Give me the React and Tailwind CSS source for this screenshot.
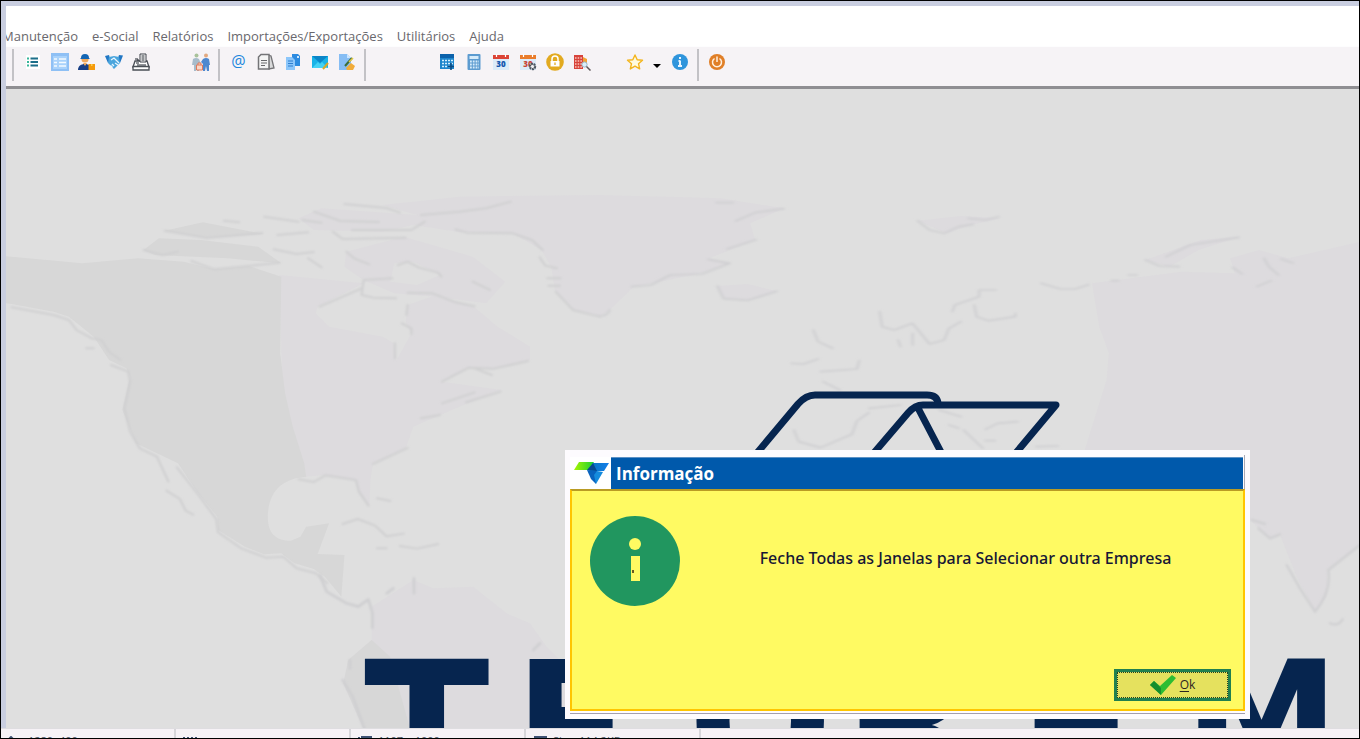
import React from 'react';

const menuItems = ['Manutenção', 'e-Social', 'Relatórios', 'Importações/Exportações', 'Utilitários', 'Ajuda'];

const icons = {
    list: (
        <>
            <path fill="#fff" d="M2 2h14v14H2z" />
            <path stroke="#1d6f8a" strokeWidth="2" d="M6.500 5.500H14M6.500 9H14M6.500 12.500H14" />
            <path stroke="#37b59a" strokeWidth="2" d="M3 5.500h2M3 9h2M3 12.500h2" />
        </>
    ),
    form: (
        <>
            <path fill="#8fc0f5" d="M0 0h18v18H0z" />
            <path fill="#a9d2fb" d="M2 3h14v13H2z" />
            <path stroke="#f4faff" strokeWidth="1.600" d="M3 6h3M8 6h7M3 9.500h3M8 9.500h7M3 13h3M8 13h7" />
        </>
    ),
    worker: (
        <>
            <circle cx="7" cy="6" r="3.600" fill="#f0a95c" />
            <path fill="#1466b4" d="M3 5a4 4 0 0 1 8 0l1 1H2z" />
            <path fill="#173f86" d="M0 17c0-4 3-6 7-6s6 2 6 6z" />
            <path fill="#f0a95c" d="m5 10 2 3 2-3z" />
            <path fill="#f59a0c" d="M10.500 11H17v6h-6.500z" />
            <path fill="#fbd04c" d="M13 11h1.500v2H13z" />
        </>
    ),
    handshake: (
        <>
            <path fill="#2277c4" d="m0 3 4-1 2 7-3 1zM18 2.500l-4-.5-2 6 3 2z" />
            <path fill="#4aa5dd" d="m4 4 5-1 5 1 1 6-6 6-6-6z" />
            <path fill="none" stroke="#e7f5ff" strokeWidth="1.300" d="m6 7 3-2 5 5M7 11l2 2M5.500 12.500l2 2M10 10l3 2" />
        </>
    ),
    register: (
        <>
            <path fill="#fff" stroke="#4a4f56" strokeWidth="1.300" d="M3 8h12l2 6H1z" />
            <path fill="#fff" stroke="#4a4f56" strokeWidth="1.300" d="M1 13.500h16V17H1z" />
            <path fill="#fff" stroke="#3c4148" d="M8 1h6v8H8z" />
            <path stroke="#20262e" d="M9.500 3h3M9.500 5h3M9.500 7h3M4 10h3M5 12h9M3 6h3v2" />
        </>
    ),
    people: (
        <>
            <circle cx="4.500" cy="2.500" r="2" fill="#a9c29b" />
            <circle cx="14" cy="2.500" r="2" fill="#e2a980" />
            <path fill="#a7bccb" d="M1 6q3-2 6 0l2 5-2 1v6H5v-5H4v5H2v-6H0z" />
            <path fill="#4e88cf" d="M11 6q3-2 6 0l1 6h-1v6h-2l-1-5-1 5h-2v-7L9 9z" />
            <path fill="#f9d8c8" stroke="#e07a5a" d="M4.500 12h6v5h-6zM6 12v-2h3v2" />
        </>
    ),
    copy: (
        <>
            <path fill="#2d8be0" d="M8 1h6l2 2v10H8z" />
            <path fill="#8cc6fa" d="M2 4h6l3 3v10H2z" />
            <path stroke="#2f7fd0" d="M4 8h5M4 10.500h5M4 13h5" />
            <path fill="#cfe8ff" d="M13 3h2v2h-2z" />
        </>
    ),
    papers: (
        <>
            <path fill="#d9d9da" stroke="#747477" strokeWidth="1.300" d="m11 2 3 1 3 12-5 1z" />
            <path fill="#f4f4f4" stroke="#747477" strokeWidth="1.500" d="M4 1.500h8V16H1.500V4z" />
            <path stroke="#68686b" strokeWidth="1.200" d="M4 7.500h6M4 10h6M4 12.500h4" />
        </>
    ),
    mail: (
        <>
            <path fill="#18b3e8" d="M1 3h16v12H1z" />
            <path fill="#0b85c8" d="m1 3 8 7 8-7z" />
            <path fill="#43d2f5" d="m1 15 6-6 2 2 2-2 6 6z" />
            <path stroke="#d7a829" strokeWidth="2" d="m12 16 5-6" />
        </>
    ),
    edit: (
        <>
            <path fill="#86bdf4" d="M1 1h8l4 4v12H1z" />
            <path fill="#cbe5ff" d="m9 1 4 4H9z" />
            <path fill="#f1ac3a" d="m8 15 5-5 4 3-2 4H9z" />
            <path stroke="#3c6d37" strokeWidth="2" d="m7 13 7-8" />
            <path stroke="#e5c944" strokeWidth="1.600" d="m11 9 4-4" />
        </>
    ),
    schedule: (
        <>
            <path fill="#1d86cd" d="M2 2h14v14H2z" />
            <path fill="#0c62ab" d="M2 1h14v4H2z" />
            <path stroke="#d5f0ff" strokeWidth="1.500" strokeDasharray="2 1" d="M4 7.500h11M4 10.500h11M4 13.500h8" />
            <path stroke="#0b4a82" strokeWidth="1.600" d="M13 10v7M10 13.500h6" />
        </>
    ),
    calculator: (
        <>
            <rect x="2.500" y="1" width="13" height="16" rx="1" fill="#5c9bd0" />
            <path fill="#d5ebfa" d="M4.500 3h9v3h-9z" />
            <path stroke="#d5ebfa" strokeWidth="1.800" strokeDasharray="1.800 1" d="M5 8.500h9M5 11.500h9M5 14.500h9" />
        </>
    ),
    lock: (
        <>
            <circle cx="9" cy="9" r="8.800" fill="#e2aa20" />
            <path fill="none" stroke="#fff" strokeWidth="1.500" d="M6 8V6a3 3 0 0 1 6 0v2" />
            <path fill="#fff" d="M4.500 8h9v5.500h-9z" />
            <path stroke="#e2aa20" strokeWidth="1.300" d="M9 9.500v2.500" />
        </>
    ),
    building: (
        <>
            <path fill="#d8433b" d="M1 2h9v14H1z" />
            <path fill="#f2a233" d="m10 4 4 2v5h-4z" />
            <path stroke="#f8c9bf" strokeWidth="1.500" strokeDasharray="1.500 1.200" d="M2 5h8M2 8h8M2 11h8M2 14h7" />
            <circle cx="11.500" cy="11.500" r="2.600" fill="#d9effc" stroke="#9bb7c8" />
            <path stroke="#5d5557" strokeWidth="1.500" d="m13.500 13.500 4 4" />
        </>
    ),
    star: <path fill="#fffbe0" stroke="#f3b51f" strokeWidth="1.400" strokeLinejoin="round" d="m9 2 2.200 4.700 5.300.5-4 3.500 1.200 5.200L9 13.200l-4.700 2.700 1.200-5.200-4-3.500 5.300-.5z" />,
    info: (
        <>
            <circle cx="9" cy="9" r="8" fill="#2f95dc" />
            <path stroke="#e8f5ff" strokeWidth="2" d="M9 4v2M9 7.500V13M7 13h4M7.500 8H9" />
        </>
    ),
    power: (
        <>
            <circle cx="9" cy="9" r="8" fill="#e07f27" />
            <path fill="none" stroke="#fff0df" strokeWidth="1.500" d="M6.500 5.500a4.500 4.500 0 1 0 5 0M9 3.500V9" />
        </>
    ),
};

function Calendar({ top, gear }) {
    return (
        <>
            <path fill="#dcebf8" d="M1 4h16v13H1z" />
            <path fill={top} d="M1 2h16v4H1z" />
            <path stroke="#fff" strokeWidth="1.200" d="M4.500 1v3M13.500 1v3" />
            <text x="9" y="14" textAnchor="middle" fontFamily="Open Sans, sans-serif" fontSize="8" fontWeight="800" fill={gear ? '#c8473a' : '#1556ae'}>30</text>
            {gear && <circle cx="13.500" cy="13.500" r="2.600" fill="#f3f0f2" stroke="#4c5560" strokeWidth="2.200" strokeDasharray="2 .6" />}
        </>
    );
}

function Tool({ label, children }) {
    return (
        <button type="button" aria-label={label} className="w-[27px] h-[26px] flex items-center justify-center shrink-0">
            <svg viewBox="0 0 18 18" className="w-[18px] h-[18px]" fill="none">{children}</svg>
        </button>
    );
}

function Separator() {
    return <div className="w-0.5 h-8 bg-[#c3c2c6] shrink-0 mx-1" />;
}

function Toolbar() {
    return (
        <div className="h-10 flex items-start bg-[#f6f3f6] border-t border-[#fdfdfe] pl-0.5 pt-0.5 overflow-hidden shrink-0">
            <Separator />
            <div className="flex ml-px">
                <Tool label="Lista">{icons.list}</Tool>
                <Tool label="Cadastro">{icons.form}</Tool>
                <Tool label="Funcionários">{icons.worker}</Tool>
                <Tool label="Contratos">{icons.handshake}</Tool>
                <Tool label="Folha">{icons.register}</Tool>
            </div>
            <div className="ml-[33px]">
                <Tool label="Autônomos">{icons.people}</Tool>
            </div>
            <Separator />
            <div className="flex ml-px">
                <button type="button" aria-label="E-mail" className="w-[27px] h-[26px] font-['Open_Sans',sans-serif] text-base leading-none text-[#1d87dd] pb-0.5">@</button>
                <Tool label="Documentos">{icons.papers}</Tool>
                <Tool label="Copiar">{icons.copy}</Tool>
                <Tool label="Mensagens">{icons.mail}</Tool>
                <Tool label="Editar">{icons.edit}</Tool>
            </div>
            <Separator />
            <div className="flex ml-[63px]">
                <Tool label="Agenda">{icons.schedule}</Tool>
                <Tool label="Calculadora">{icons.calculator}</Tool>
                <Tool label="Calendário"><Calendar top="#dc4436" /></Tool>
                <Tool label="Configurar calendário"><Calendar top="#ea7d2c" gear /></Tool>
                <Tool label="Bloquear">{icons.lock}</Tool>
                <Tool label="Consultar empresa">{icons.building}</Tool>
            </div>
            <div className="flex ml-[26px]">
                <Tool label="Favoritos">{icons.star}</Tool>
                <button type="button" aria-label="Abrir favoritos" className="w-[18px] h-[26px] pt-2 flex items-center justify-center">
                    <svg viewBox="0 0 8 4" className="w-2 h-1"><path d="M0 0h8L4 4z" /></svg>
                </button>
                <Tool label="Informações">{icons.info}</Tool>
            </div>
            <Separator />
            <Tool label="Sair">{icons.power}</Tool>
        </div>
    );
}

function Wallpaper() {
    return (
        <svg viewBox="6 89 1353 639" preserveAspectRatio="xMinYMin slice" className="absolute inset-0 w-full h-full" fill="none" aria-hidden="true">
            <defs>
                <filter id="soft"><feGaussianBlur stdDeviation="3" /></filter>
            </defs>

            {/* North America and Greenland */}
            <g transform="translate(0 180) scale(.3827 .3333)">
                <g fill="#dddbde">
                    <path d="M730 285 950 310 830 380 825 400 860 440 1000 470 1030 490 1036 540 1075 460 1060 430 1065 375 1140 345 1240 382 1300 440 1385 500 1385 540 1290 566 1225 563 1155 605 1310 630 1225 668 1150 705 1080 740 1060 805 975 850 968 900 965 978 935 935 930 900 850 885 795 890 740 700z" />
                    <path d="m1090 105-90-30 200-25 370-5v363l-70-18-50-60-10-70-25-50-75-50-145-5-115-20-80 20-180-5-40-35 60-30z" />
                    <path d="m905 215 150-45 180 60 85 75-50 65-130-20-110-10-80-40-50-40z" />
                    <path d="m1030 250 50-5 70 40-60 30-70-10z" fill="#dfdfdf" />
                </g>
                <g fill="#d7d7d7">
                    <path d="M10 228 215 250 360 235 480 245 560 268 650 258 735 290 732 520 745 640 765 740 795 850 800 890C740 895 705 930 700 1000c-3 60 20 82 60 82l25-12 15-30 60-10-30 92 70 3-8 125-42-58-30-25-50-17-35-30-45 3-50-23-70-50-2-40-53-75-50-85-55-30-55-30-35-100 20-100-10-25-45-25-40-70-65-60-40-15-110-23-20-3z" />
                    <path d="m375 210 40-35 110 5 150 20 60 50-140-15-190-10z" />
                    <path d="m430 152 100-25 160 35-150 12z" />
                </g>
                <g stroke="#d0d0d1" strokeWidth="6" strokeLinecap="round" strokeLinejoin="round" filter="url(#soft)">
                    <path d="m30 382 110 23 40 15 20 30 40 25 25 5 20 35 30 25M290 555l45 20 5 30-15 80 15 70 25 50 45 25 30 75M462 862l55 80 48 75 5 40 60 48 65 28 45-3 35 35 50 15 30 30" />
                    <path d="m435 932 35 25 15 35 20 12M225 505h20M375 210l50 15 40-10M430 152l110 22 145-15M500 243l60 25 90-10 80-10M585 122l40 5M690 110l90 15M820 95l70 28 100 3M900 72l110 12 35 14M790 120l50 8M725 165l80-8M715 208l60 14 45-6M805 235l35 27M870 155l25 22 165-4M920 150h155l35-25M905 215l20 20 40 18M1100 105l100-10 70-10 65-20M1190 148l30 10 120 2 50 20 28 30M1410 232l15 25 30 8M1430 295h35M1433 317h30M1452 335l45 55 70 20M1040 255l25-10 30 18 50 15 8 12M1235 305l45 25M1065 338l65 2 60 27 50 12M950 300l75-5M950 300l-5 45 30 8 60 2M835 380l110-55M1065 375l-3 30M1050 430l25 15v18M1032 490v45M1155 605l70-42 65 3 90-23M1240 565l45 20M1155 670l85-33M1218 667l90-32M1100 715l50-10M975 852l90-48M780 898l40 8 30-20 80 14 8 35 25 42M985 955l35 8M895 1032l40-15 45 20 30 32 45-8M985 1105h25M1045 1098l45 8 55-14" />
                </g>
            </g>

            {/* Europe and Asia */}
            <g transform="translate(600 180) scale(.4847 .3333)">
                <g fill="#dddbde">
                    <path d="m0 45 250 10 130 30-70 45 10 50-95 55 45 15-70 33-130 37-50 70-20 18z" />
                    <path d="M1015 310 1200 275 1310 280 1300 235 1360 210 1420 235 1568 185V1600H1330V810H1000L1045 600 1050 520 1030 440z" />
                    <path d="m242 318 13 38 55 5 55-27-60-22zM655 122l60 38 50-25 60-20-80-7zM1125 240l50 20 60-50 85-40-80 10z" />
                </g>
                <g stroke="#cfcfd1" strokeWidth="5" strokeLinecap="round" strokeLinejoin="round" filter="url(#soft)">
                    <path d="M0 408q15 0 20-18M65 320l40-5 40-30 65-3 58-32-45-12M240 68h35M280 123l40-25 60-12M262 207l60-28M242 318l13 38 50 5 60-27M655 122l25 28 30 10 30-20 30-7M760 115l35 5 28-10M1168 230l50-35 100-23M1125 240l30 18 40 2M910 310l40 17 30 0 28-13M1055 302h15M1090 285h18M1355 320l30-18M1305 262l20 20M1370 235l10 25 20 25M1405 237l25 12" />
                    <path d="m577 395 5 45 25 10 38-20 35 62 30-12 10-35 25-20M817 330h-35v20l-50 25-5 20M772 375l5 35 25 12 55-12v-10M440 450l10 35 30 20M395 550l25 2 30-15M455 575l75-8 5-25M615 480l5 20M645 460v35M555 685l65-10M400 750l10 35 45 18 65-40 10-40 25-25M700 690l45 20M720 735l20 10M750 750l40 55M795 748l25-18 42-5M795 782h20M900 800l45-2M460 605l35 25" />
                </g>
            </g>
            <g transform="translate(1220 440) scale(.3333)">
                <path fill="#dfdfdf" d="M-60 120 90 240l60 55 30-10 50 125 55 105 35-45 2-80 98-75v550H-60z" />
                <path stroke="#d0d0d2" strokeWidth="7" strokeLinecap="round" filter="url(#soft)" d="m95 240 40 12M115 265l35 30 30-12M200 375l40 70 45 70q50-60 40-125l95-75M330 550q25 10 38-12" />
            </g>

            {/* South America */}
            <g transform="translate(300 480) scale(.3333)">
                <path fill="#dddbde" d="m215 380 125-80 60 25 120-5 100 80 70 30 50 70 60 60v185H190l-60-135 15-70 70-60z" />
                <path fill="#d7d7d7" d="m215 480 55 50 60 215H190l-60-135 15-70z" />
                <path stroke="#cfcfd1" strokeWidth="8" strokeLinecap="round" strokeLinejoin="round" filter="url(#soft)" d="m60 285 20 50 60 35 35 10 30-22 12 40v45M150 540v25M128 600l30 50 35 95M342 295v45M260 340l20-15M700 510l20-20" />
            </g>

            {/* Brand mark */}
            <g stroke="#06254f" strokeWidth="7" strokeLinejoin="round">
                <path d="m757 453 41-49q8-9 17-9h112q10 0 11 8" />
                <path d="m873 454 35-41q7-8 15-8h133l-41 49M918 408l24 46" />
            </g>
            <text fill="#06254f" fontFamily="DejaVu Sans, sans-serif" fontWeight="700" fontSize="170">
                <tspan x="364" y="793" fontSize="184">T</tspan>
                <tspan x="514 688 844 1019" y="783">EORE</tspan>
                <tspan x="1184" y="773" fontSize="156">M</tspan>
            </text>
        </svg>
    );
}

function InfoDialog() {
    return (
        <section role="alertdialog" aria-labelledby="dialog-title" aria-describedby="dialog-message" className="absolute right-[109px] bottom-[9px] w-[685px] bg-[#fdfbfe] p-[5px]">
            <header className="flex h-[34px] pt-0.5 border-r border-[#a9a9b5]">
                <div className="w-[41px] bg-white flex items-center justify-center">
                    <svg viewBox="0 0 36 24" className="w-9 h-6" aria-hidden="true">
                        <defs>
                            <linearGradient id="leaf"><stop stopColor="#a8f500" /><stop offset="1" stopColor="#18cf35" /></linearGradient>
                            <linearGradient id="wing"><stop stopColor="#0873bd" /><stop offset="1" stopColor="#137eea" /></linearGradient>
                        </defs>
                        <path fill="url(#leaf)" d="M6 1h15l-5 8H1z" />
                        <path fill="url(#wing)" d="M20 2h16l-5 8H16z" />
                        <path fill="#064990" d="m14 9 6-7 4 8z" />
                        <path fill="#0862bd" d="m14 9 10 1-1 13-5-5z" />
                        <path fill="#158bdd" d="m24 10 6 1-7 12-2-9z" />
                    </svg>
                </div>
                <h1 id="dialog-title" className="flex-1 mr-px bg-[#0059ab] border-t border-[#5d91c4] text-white font-bold text-[17px] leading-8 pl-[5px]">Informação</h1>
            </header>
            <div className="border-b border-[#a49fae] pb-0.5">
                <div className="bg-[#fffa62] border-2 border-[#ffc500] border-t-[#b99b24] px-3 pb-2 pt-[25px]">
                    <div className="flex items-start pl-1.5">
                        <svg viewBox="0 0 90 90" className="w-[90px] h-[90px] shrink-0" aria-hidden="true">
                            <circle cx="45" cy="45" r="45" fill="#21965f" />
                            <circle cx="45" cy="28" r="6" fill="#fffa62" />
                            <path fill="#fffa62" d="M41 40h9v25h-9z" />
                            <path fill="#695b22" d="M42 54h2v3h-2z" />
                        </svg>
                        <p id="dialog-message" className="flex-1 text-center font-['Noto_Sans','Open_Sans',sans-serif] text-base leading-6 pt-[30px] pl-5 text-[#171735] font-medium">Feche Todas as Janelas para Selecionar outra Empresa</p>
                    </div>
                    <div className="flex justify-end pt-[63px]">
                        <button type="button" className="w-[117px] h-8 border-[3px] border-[#21804f] bg-[#e5e15e] p-0">
                            <span className="h-full border border-dotted border-[#253f22] flex items-center justify-center gap-1 text-xs text-[#2d2522]">
                                <svg viewBox="0 0 26 20" className="w-[26px] h-5" aria-hidden="true">
                                    <path fill="#2cbd32" d="m0 10 4-4 6 5L22 0l4 3-15 17z" />
                                    <path fill="#168e2d" d="m0 10 4-4 7 7v7z" />
                                </svg>
                                <span><u className="underline-offset-2">O</u>k</span>
                            </span>
                        </button>
                    </div>
                </div>
            </div>
        </section>
    );
}

function StatusPanel({ children, text }) {
    return (
        <div className="w-[175px] shrink-0 flex gap-1.5 pt-1 pl-[7px] border-r-2 border-[#d7d6da]">
            <svg viewBox="0 0 14 14" className="w-3.5 h-3.5 mt-[3px]" fill="none" stroke="#3f5273" strokeWidth="2" aria-hidden="true">{children}</svg>
            {text}
        </div>
    );
}

function StatusBar() {
    return (
        <footer className="h-2.5 shrink-0 flex items-start overflow-hidden bg-[#f6f2f6] border-t border-[#dedde0] text-[11px] leading-4 text-[#4b5363] -ml-[5px] z-10">
            <StatusPanel text="1280x400"><path d="M3 1v12M0 4l3-3 3 3" /></StatusPanel>
            <StatusPanel><path d="M1 1v12M5 1v12M9 1v12M13 1v12" /></StatusPanel>
            <StatusPanel text="1107 x 1000"><path d="M4 1h9v12H4zM1 1v3" /></StatusPanel>
            <StatusPanel text="Size: 114,2KB"><path d="M2 1h11v12H2z" /></StatusPanel>
        </footer>
    );
}

export default function App() {
    return (
        <div className="h-screen flex flex-col overflow-hidden bg-[#c9cee0] border border-black pl-[5px] pt-[5px] font-['Open_Sans','Noto_Sans',sans-serif]">
            <nav className="h-10 shrink-0 flex items-end gap-3.5 bg-white overflow-hidden text-[13px] leading-5 text-[#69686d]">
                {menuItems.map((item) => (
                    <a key={item} href="#" className="first:-ml-1 whitespace-nowrap">{item}</a>
                ))}
            </nav>
            <Toolbar />
            <main className="relative flex-1 min-h-0 bg-[#dfdfdf] border-t-[3px] border-[#8f8e92] overflow-hidden">
                <Wallpaper />
                <InfoDialog />
            </main>
            <StatusBar />
        </div>
    );
}
